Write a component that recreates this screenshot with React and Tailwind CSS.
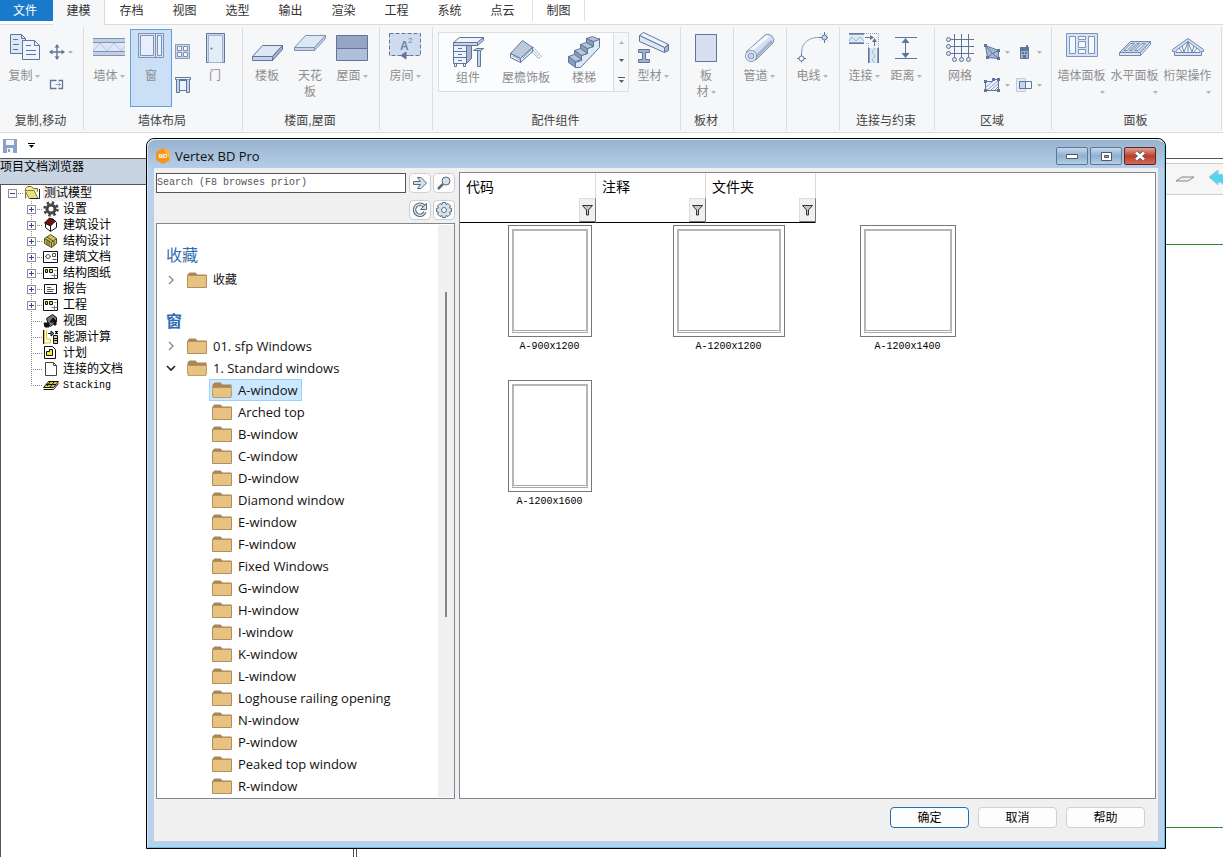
import React, { useState } from 'react';

const tabs = ['存档', '视图', '选型', '输出', '渲染', '工程', '系统', '点云'];

const S = '#5f7599';
const M = '#a3b3cf';
const L = '#dde8f7';

const Icon = ({ size = 32, children }) => (
  <svg width={size} height={size} viewBox={`0 0 ${size} ${size}`} fill="none" stroke={S} className="block shrink-0">
    {children}
  </svg>
);

const Caret = ({ color = '#b4b4b4' }) => (
  <svg width="5" height="3" viewBox="0 0 5 3" className="inline-block shrink-0 align-middle">
    <path d="M0 0h5L2.5 3z" fill={color} />
  </svg>
);

const icons = {
  copy: (
    <Icon>
      <path d="M2.5 2.5h11l4 4v15h-15z" fill={L} />
      <path d="M13.5 2.5v4h4M5 7.5h5M5 12.5h6M5 17.5h5" />
      <path d="M14.5 8.5h12l5 5v14h-17z" fill="#eef4fd" />
      <path d="M26.5 8.5v5h5M18 13.5h5M18 18.5h10M18 22.5h10" />
    </Icon>
  ),
  move: (
    <Icon size={16}>
      <path d="M8 2v12M2 8h12" strokeWidth="1.4" />
      <path d="M8 0l2.5 3.5h-5zM8 16l2.5-3.5h-5zM0 8l3.5-2.5v5zM16 8l-3.5-2.5v5z" fill={S} stroke="none" />
    </Icon>
  ),
  stretch: (
    <Icon size={16}>
      <path d="M7.5 11.5h-6v-8h6M9.5 3.5h4v8h-4" strokeWidth="1.3" />
      <path d="M6.5 7.5h5M9.5 5.5l2 2-2 2" stroke="#8b9dbd" />
    </Icon>
  ),
  wall: (
    <Icon>
      <path d="M0 6h32v18H0z" fill={L} stroke="none" />
      <path d="M0 6h32v4H0zM0 20h32v4H0z" fill="#c3cfe5" stroke="none" />
      <path d="M0 6.5h32M0 10.5h32M0 19.5h32M0 23.5h32" stroke="#7f92b3" />
      <path d="M0 19l7-8 7 8 7-8 7 8 4-5" stroke="#b3c1db" />
    </Icon>
  ),
  window: (
    <Icon>
      <g stroke="#7f92b3">
        <path d="M3.5 1.5h25v24h-25z" fill="#d6e3f5" />
        <path d="M5.5 3.5h13v20h-13zM22.5 3.5h4v20h-4z" fill="#e6effb" />
        <path d="M20.5 2v23" />
      </g>
    </Icon>
  ),
  panes: (
    <Icon size={16}>
      <path d="M.5.5h14v14H.5z" fill="#c6d3e8" stroke="#8b9dbd" />
      <path d="M2.5 2.5h4v4h-4zM8.5 2.5h4v4h-4zM2.5 8.5h4v4h-4zM8.5 8.5h4v4h-4z" fill="#f4f7fc" stroke="#7f92b3" />
    </Icon>
  ),
  opening: (
    <Icon size={16}>
      <path d="M.5.5h15v2H.5z" fill="#eef4fd" />
      <path d="M1.5 2.5v13h3v-13M11.5 2.5v13h3v-13" fill="#c6d3e8" />
      <path d="M4.5 3.5h7v10h-7z" fill="#eef4fd" />
    </Icon>
  ),
  door: (
    <Icon>
      <path d="M7.5 1.5h18v29h-18z" fill="#c9d8ee" />
      <path d="M9.5 3.5h14v27h-14z" fill="#e3edfa" stroke="#a3b3cf" />
      <circle cx="12.5" cy="16.5" r="1" fill={S} stroke="none" />
    </Icon>
  ),
  slab: (
    <Icon>
      <path d="M1.5 24.5l10-11h20l-10 11z" fill={L} />
      <path d="M1.5 24.5v4h20v-4z" fill="#c6d3e8" />
      <path d="M21.5 24.5l10-11v4l-10 11z" fill={M} />
    </Icon>
  ),
  ceiling: (
    <Icon>
      <path d="M.5 15.5l11-12h20l-11 12z" fill={L} stroke="#7f92b3" />
      <path d="M.5 15.5v3h20v-3zM20.5 15.5l11-12v3l-11 12z" fill="#c6d3e8" stroke="#7f92b3" />
    </Icon>
  ),
  roof: (
    <Icon>
      <path d="M.5 3.500h31v13H.5z" fill="#94a6c4" />
      <path d="M.5 16.5h31v12H.5z" fill="#b0bfd8" />
    </Icon>
  ),
  room: (
    <Icon>
      <path d="M.5 1.500h31v22H.5z" fill="#cfdcef" strokeDasharray="4 2" />
      <path d="M17 20v7l-5-3.5zM12 23.5h8" fill={S} />
      <text x="11" y="18" fontSize="12" fontWeight="700" fill="#6f85aa" stroke="none" fontFamily="Liberation Sans, sans-serif">A</text>
      <text x="19" y="11" fontSize="8" fill="#6f85aa" stroke="none" fontFamily="Liberation Sans, sans-serif">2</text>
    </Icon>
  ),
  desk: (
    <Icon>
      <path d="M1.5 9.5h13v18h-13z" fill="#eaf1fb" />
      <path d="M14.5 9.5h5v13l-5 5z" fill={M} />
      <path d="M1.5 15.5h13M1.5 21.5h13M6 12.5h4M6 18.5h4M6 24.5h4M2.5 27.5v3h2v-3M11.5 27.5v3h2v-3" />
      <path d="M1.5 6.5l6-5h24l-6 5z" fill="#eef4fd" />
      <path d="M1.5 6.5h24v3h-24zM25.5 6.5l6-5v3l-6 5z" fill="#c6d3e8" />
      <path d="M21.500 14.5l3-2h7l-3 2zM25.5 14.500v16h3v-16l2-2" fill="#c6d3e8" />
    </Icon>
  ),
  eave: (
    <Icon>
      <path d="M.5 17.5l12-13 10 7-12 11z" fill="#bcc9dd" />
      <path d="M.5 17.5v4l10 5v-4zM10.5 22.5v4l12-11v-4z" fill="#e9f0fa" />
      <path d="M22.5 10.5l9 10-3 2-8-8M3 20l7 4M13 22l8-8M23 14l6 7" strokeDasharray="2 1" stroke="#8093b5" />
    </Icon>
  ),
  stairs: (
    <Icon>
      <path d="M7.500 31.500v-5l6-2v-5l6-2v-5l6-2v-5l6-3v9l-19 20z" fill={L} />
      <path d="M.5 20.5l7 5v6l-7-5zM6.5 14.5l7 5v5l-7-5zM12.5 8.5l7 4v5l-7-4zM18.5 2.5l7 3v5l-7-3z" fill="#8a9dbd" />
      <path d="M.5 20.5l6-2 7 5-6 2zM6.5 14.5l6-2 7 5-6 2zM12.5 8.5l6-2 7 4-6 2zM18.5 2.5l6-2 7 3-6 2z" fill="#b7c5de" />
    </Icon>
  ),
  profile: (
    <Icon>
      <path d="M2.5 3.5l4-3 25 12-4 3z" fill="#eef4fd" />
      <path d="M2.5 3.5v6l25 11v-5z" fill={L} />
      <path d="M27.5 15.5l4-3v6l-4 2z" fill={M} />
      <path d="M1.5 17.5h11v3h-4v7h4v3h-11v-3h4v-7h-4z" fill={M} />
    </Icon>
  ),
  board: (
    <Icon>
      <path d="M5.5 2.5h21v27h-21z" fill="#d6e0f1" />
    </Icon>
  ),
  pipe: (
    <Icon>
      <path d="M3 20L22 3q4-2 7 1t1 7L13 28z" fill="#d3def0" stroke="#7f92b3" />
      <path d="M7 19L25 4" stroke="#f5f9ff" strokeWidth="3" />
      <path d="M12 26L29 9" stroke="#a3b3cf" strokeWidth="3" />
      <circle cx="8" cy="24" r="5.5" fill="#eaf1fb" stroke="#7f92b3" />
      <circle cx="8" cy="24" r="3" fill="#c6d3e8" stroke="#7f92b3" />
    </Icon>
  ),
  wire: (
    <Icon>
      <path d="M5.5 22C5 10 14 5 24 5.5" stroke="#8b9dbd" />
      <path d="M5.5 21.5v9M1 26.5h9M28.5 0v11M23 5.5h9" />
      <path d="M24 1l8 8M32 1l-8 8" stroke="#a9b8d2" strokeDasharray="1 1" />
      <circle cx="5.500" cy="26.5" r="2.5" fill="#f4f7fc" />
      <circle cx="28.500" cy="5.5" r="2.5" fill="#c6d9f2" />
    </Icon>
  ),
  connect: (
    <Icon>
      <path d="M1 1h15v11H1z" fill={L} stroke="none" />
      <path d="M1 2h15M1 11h15" strokeWidth="2" stroke="#8d9fbf" />
      <path d="M1 1.500h15M1 11.500h15" />
      <path d="M1 9l3-4 4 4 4-4 4 4" stroke={M} />
      <path d="M16 1.5h14.5V16M18 11.500h2.500v5" strokeDasharray="1 1" stroke="#8b9dbd" />
      <path d="M17 5.5h6M26.5 14V9" />
      <path d="M22 3l4 2.5-4 2.5zM24 10l2.5-4 2.5 4z" fill={S} stroke="none" />
      <path d="M20 16h11v15H20z" fill={L} stroke="none" />
      <path d="M21 16v15M30 16v15" strokeWidth="2" stroke="#8d9fbf" />
      <path d="M20.5 16v15M30.5 16v15" />
      <path d="M27 16l-3 4 3 4-3 4 3 3" stroke={M} />
    </Icon>
  ),
  distance: (
    <Icon>
      <path d="M5 5.5h22M5 26.5h22M15.5 8v16" />
      <path d="M15.5 6l4 5h-8zM15.5 26l4-5h-8z" fill={S} stroke="none" />
    </Icon>
  ),
  grid: (
    <Icon>
      <path d="M10.5 2v24M17.5 2v24M24.5 2v24M6 7.5h24M6 14.5h24M6 21.5h24" />
      <g fill="#d6e4f8">
        <circle cx="4.5" cy="7.5" r="2" /><circle cx="4.5" cy="14.5" r="2" /><circle cx="4.5" cy="21.5" r="2" />
        <circle cx="10.5" cy="27.5" r="2" /><circle cx="17.5" cy="27.5" r="2" /><circle cx="24.5" cy="27.5" r="2" />
      </g>
    </Icon>
  ),
  areaMesh: (
    <Icon size={16}>
      <path d="M1.5 1.5l13 5v8l-11-1z" fill="#a9b8d2" />
      <path d="M1.5 1.5l7 8 6-3M3.5 13.5l5-4 6 5" />
      <path d="M0 0h3v3H0zM13 5h3v3h-3zM2 12h3v3H2zM13 13h3v3h-3z" fill={S} stroke="none" />
    </Icon>
  ),
  house: (
    <Icon size={16}>
      <path d="M4.5 5.5h8v9h-8z" fill="#9fb0d0" />
      <path d="M4 3h9v4H4zM10 1h2v2h-2zM6 8h2v2H6zM9 8h2v2H9zM7 11h3v4H7z" fill={S} stroke="none" />
    </Icon>
  ),
  areaHatch: (
    <Icon size={16}>
      <path d="M1.5 4.5h7v-2h6v11h-13z" fill="#eef4fd" />
      <path d="M2 10l6-5M3 13l11-9M7 13l7-6M11 13l3-3" stroke="#8b9dbd" />
      <path d="M0 3h3v3H0zM8 1h3v3H8zM13 1h3v3h-3zM0 12h3v3H0zM13 12h3v3h-3z" fill={S} stroke="none" />
    </Icon>
  ),
  overlap: (
    <Icon size={16}>
      <path d="M.5 1.5h9v13h-9z" fill="#e3edfa" stroke="#b9cce0" />
      <path d="M3.5 4.5h12v7h-12z" fill="#f4f7fc" />
      <path d="M3.5 4.5h6v7h-6z" fill="#c6d3e8" />
    </Icon>
  ),
  wallPanel: (
    <Icon>
      <g stroke="#7f95bd">
        <path d="M.5 1.5h31v23H.5z" fill="#d6e3f5" />
        <path d="M3.5 4.5h6v17h-6zM12.5 4.500h7v3h-7zM12.5 9.5h7v6h-7zM12.5 17.5h7v4h-7zM22.5 4.5h6v17h-6z" fill="#f5f8fd" />
      </g>
    </Icon>
  ),
  floorPanel: (
    <Icon>
      <g stroke="#7489ad">
        <path d="M.5 20.5l11-11h20l-10 11z" fill="#c6d3e8" />
        <path d="M.5 20.5v3h21v-3zM21.5 20.5l10-11v3l-10 11z" fill={L} />
        <path d="M5 18.5l7-7h3l-7 7zM11 18.5l7-7h2l-7 7zM16 18.5l7-7h3l-7 7z" fill="#eef4fd" />
      </g>
    </Icon>
  ),
  truss: (
    <Icon>
      <g stroke="#6f86ad">
        <path d="M.5 17.5L16 6.5l15.5 11v2h-2v4h-27v-4h-2z" fill="#d6e2f4" />
        <path d="M4 18.5l12-9 12 9v2H4z" fill="#f4f7fc" />
        <path d="M16 9v11M16 10l-4 10M16 10l4 10M10 14l2 6M22 14l-2 6M7 16l3 4M25 16l-3 4" />
      </g>
    </Icon>
  ),
};

const RibbonButton = ({ icon, label, menu, width = 'w-[42px]', active, gallery }) => (
  <button
    className={`${width} flex flex-col items-center border ${gallery ? 'h-[56px] border-transparent' : active ? 'h-[78px] border-[#62a2d8] bg-[#cbe0f6]' : 'h-[78px] border-transparent'} pt-[2px] text-xs leading-4 text-[#8e8e8e]`}
  >
    {icons[icon]}
    <span className={`${gallery ? 'mt-[2px]' : 'mt-1'} whitespace-nowrap text-center`}>
      {label}
      {menu && <span className="ml-[2px]"><Caret /></span>}
    </span>
  </button>
);

const PanelButton = ({ icon, label }) => (
  <button className="flex h-[78px] w-[53px] flex-col items-center pt-[3px] text-xs leading-4 text-[#8e8e8e]">
    {icons[icon]}
    <span className="mt-1 whitespace-nowrap">{label}</span>
    <span className="self-end pr-[3px]"><Caret /></span>
  </button>
);

const SmallColumn = ({ items, menu, label }) => (
  <div className="flex flex-col items-center gap-[17px] pt-[15px]">
    {items.map((name, i) => (
      <button key={name} aria-label={`${label} ${i + 1}`} className="flex h-4 items-center gap-[5px] px-[3px]">
        {icons[name]}
        {menu && <Caret />}
      </button>
    ))}
  </div>
);

const Group = ({ title, width, className = 'justify-center', children }) => (
  <div className={`${width} my-[2px] flex shrink-0 flex-col border-r border-[#dcdfe2]`}>
    <div className={`flex h-[86px] items-start pt-[2px] ${className}`}>{children}</div>
    <div className="h-4 pr-[2px] text-center text-xs leading-4 text-[#444]">{title}</div>
  </div>
);

const Ribbon = () => (
  <div className="flex h-[108px] overflow-hidden border-b border-[#d9dcde] bg-[#f5f7f9]">
    <Group title="复制,移动" width="w-[84px]" className="pl-[3px]">
      <RibbonButton icon="copy" label="复制" menu />
      <div className="flex flex-col gap-[17px] pl-1 pt-[15px]">
        <button aria-label="移动" className="flex items-center gap-[3px]">{icons.move}<Caret /></button>
        <button aria-label="拉伸">{icons.stretch}</button>
      </div>
    </Group>
    <Group title="墙体布局" width="w-[159px]" className="pl-1">
      <RibbonButton icon="wall" label="墙体" menu />
      <RibbonButton icon="window" label="窗" active />
      <SmallColumn items={['panes', 'opening']} label="开口" />
      <RibbonButton icon="door" label="门" />
    </Group>
    <Group title="楼面,屋面" width="w-[137px]" className="pl-[2px]">
      <RibbonButton icon="slab" label="楼板" width="w-[44px]" />
      <RibbonButton icon="ceiling" label={<>天花<br />板</>} />
      <RibbonButton icon="roof" label="屋面" menu />
    </Group>
    <Group width="w-[53px]" className="justify-center pr-[2px]">
      <RibbonButton icon="room" label="房间" menu />
    </Group>
    <Group title="配件组件" width="w-[248px]" className="pl-[5px]">
      <div className="mt-[3px] flex h-[60px] border border-[#dcdfe2] bg-[#fafcfe]">
        <div className="flex">
          <RibbonButton icon="desk" label="组件" width="w-[58px]" gallery />
          <RibbonButton icon="eave" label="屋檐饰板" width="w-[58px]" gallery />
          <RibbonButton icon="stairs" label="楼梯" width="w-[58px]" gallery />
        </div>
        <div className="flex w-[15px] flex-col items-center justify-around border-l border-[#dcdfe2] bg-[#f5f7f9]">
          <button aria-label="上" className="flex rotate-180"><Caret /></button>
          <button aria-label="下" className="flex"><Caret color="#4c5c78" /></button>
          <button aria-label="更多" className="flex flex-col items-center gap-[2px]">
            <span className="h-px w-[7px] bg-[#4c5c78]" />
            <Caret color="#4c5c78" />
          </button>
        </div>
      </div>
      <RibbonButton icon="profile" label="型材" menu width="w-[48px]" />
    </Group>
    <Group title="板材" width="w-[53px]" className="justify-center pr-[2px]">
      <RibbonButton icon="board" label={<>板<br />材</>} menu />
    </Group>
    <Group width="w-[53px]" className="justify-center pr-[2px]">
      <RibbonButton icon="pipe" label="管道" menu />
    </Group>
    <Group width="w-[53px]" className="justify-center pr-[2px]">
      <RibbonButton icon="wire" label="电线" menu />
    </Group>
    <Group title="连接与约束" width="w-[95px]" className="pl-[3px]">
      <RibbonButton icon="connect" label="连接" menu />
      <RibbonButton icon="distance" label="距离" menu />
    </Group>
    <Group title="区域" width="w-[117px]" className="pl-1">
      <RibbonButton icon="grid" label="网格" />
      <SmallColumn items={['areaMesh', 'areaHatch']} menu label="区域" />
      <SmallColumn items={['house', 'overlap']} menu label="空间" />
    </Group>
    <Group title="面板" width="w-[170px]" className="pl-[3px]">
      <PanelButton icon="wallPanel" label="墙体面板" />
      <PanelButton icon="floorPanel" label="水平面板" />
      <PanelButton icon="truss" label="桁架操作" />
    </Group>
  </div>
);

/* project tree */

const K = '#111';
const treeIcons = {
  gear: (
    <g stroke="#444">
      <circle cx="8" cy="8" r="4" strokeWidth="3" />
      <circle cx="8" cy="8" r="6.5" strokeWidth="2.5" strokeDasharray="2.5 2.6" />
    </g>
  ),
  house: (
    <g stroke={K}>
      <path d="M2.500 5.500v5l5 4 6-4v-5l-4-4z" fill="#fff" />
      <path d="M1.500 6l5-5 6 3-5 5z" fill="#7a0f12" />
      <path d="M7.500 9v5" />
    </g>
  ),
  frame: (
    <g stroke="#55511a">
      <path d="M1.500 5.500l6-4 6 4v5l-5 4-7-4z" fill="#c9c25e" />
      <path d="M1.500 5.500l7 4 5-4M8.500 9.500v5M4 4l6 4M4 7v5M6 8v5M11 8v5" />
    </g>
  ),
  archDoc: (
    <g stroke={K}>
      <path d="M.5 2.5h14v11H.5z" fill="#fff" />
      <path d="M9.5 4.5h3v3h-3zM9.5 10.5h4M2 7.5h1M7 7.5h1" stroke="#555" />
      <circle cx="5" cy="7.5" r="2" stroke="#555" />
    </g>
  ),
  sheet: (
    <g stroke={K}>
      <path d="M.5 2.500h14v11H.5z" fill="#fff" />
      <path d="M2.5 4.5h2v3h-2zM6.5 4.5h3v3h-3z" fill="#e4d93a" />
      <path d="M8.5 10.500h6M11.500 8.500v5M11.500 5.500h2" stroke="#777" />
    </g>
  ),
  report: (
    <g stroke={K}>
      <path d="M1.500 3.500h12v9h-12z" fill="#fff" />
      <path d="M4 6.500h4M4 8.500h7M4 10.500h6" stroke="#555" />
    </g>
  ),
  camera: (
    <g stroke={K}>
      <path d="M3.500 5.500l6-4 4 3v4l-6 5-2-2z" fill="#777" />
      <path d="M1 10h5v4H2zM7 9l3-4 3 3v4h-2V9z" fill={K} />
    </g>
  ),
  energy: (
    <g stroke={K}>
      <path d="M1.500 1v14M3.500 1v9h4v4h-6" stroke="#d6ca2c" />
      <path d="M.5 1v14M5 4.500h4" />
      <path d="M8 2l3 2.500L8 7z" fill="#2aa5a5" />
      <path d="M10.500 6.500h4v8h-4z" fill="#c9d3a4" />
      <path d="M12 2.500h3l-3 2h3M11 9.500h3M11 11.500h3" />
    </g>
  ),
  plan: (
    <g stroke={K}>
      <path d="M1.500 1.500h8l3 3v9h-11z" fill="#fff" />
      <path d="M3.500 6.500h3v-2h3v6h-6z" fill="#f2e53c" />
    </g>
  ),
  page: (
    <g stroke="#444">
      <path d="M2.500 1.500h8l3 3v10h-11z" fill="#fff" />
      <path d="M10.500 1.500v3h3" />
    </g>
  ),
  stack: (
    <g stroke={K}>
      <path d="M.5 10.500l5-6h10l-5 6z" fill="#d8cf3c" />
      <path d="M.5 12.500h10l5-6M4 9l3-4M7 10l4-5M3 7.500h10" />
    </g>
  ),
};

const projectTree = [
  { label: '设置', icon: 'gear', plus: true },
  { label: '建筑设计', icon: 'house', plus: true },
  { label: '结构设计', icon: 'frame', plus: true },
  { label: '建筑文档', icon: 'archDoc', plus: true },
  { label: '结构图纸', icon: 'sheet', plus: true },
  { label: '报告', icon: 'report', plus: true },
  { label: '工程', icon: 'sheet', plus: true },
  { label: '视图', icon: 'camera' },
  { label: '能源计算', icon: 'energy' },
  { label: '计划', icon: 'plan' },
  { label: '连接的文档', icon: 'page' },
  { label: 'Stacking', icon: 'stack', mono: true, last: true },
];

const Branch = ({ plus, minus, last }) => (
  <svg width="17" height="16" viewBox="0 0 17 16" fill="none" className="block shrink-0" shapeRendering="crispEdges">
    {!minus && <path d={last ? 'M5.5 0v8' : 'M5.5 0v16'} stroke="#888" strokeDasharray="1 1" />}
    <path d="M5 8.5h12" stroke="#888" strokeDasharray="1 1" />
    {(plus || minus) && <path d="M1.5 4.5h8v8h-8z" fill="#fff" stroke="#919191" />}
    {(plus || minus) && <path d="M3 8.5h5" stroke="#2b4a94" />}
    {plus && <path d="M5.500 6v5" stroke="#2b4a94" />}
  </svg>
);

const ProjectBrowser = () => (
  <aside className="flex w-[354px] shrink-0 flex-col border-r border-t border-[#555]">
    <h2 className="h-[25px] bg-[#c8d4e2] text-xs leading-4 text-black">项目文档浏览器</h2>
    <ul className="flex-1 border-l border-t border-[#555] bg-white text-xs leading-4 text-black">
      <li className="flex items-center pl-[6px]">
        <Branch minus />
        <Icon size={16}>
          <path d="M1.5 13.5v-10l2-2h4l2 2h4v3" fill="#f3eca0" stroke="#77713a" />
          <path d="M1 5.5h9l4 8H5z" fill="#e8df80" stroke="#8a8345" />
          <path d="M15.5 4v9.500H6" stroke="#222" />
        </Icon>
        <span className="ml-[3px] bg-[#f0f0f0] pl-px">测试模型</span>
      </li>
      {projectTree.map((node) => (
        <li key={node.label} className="flex items-center pl-[25px]">
          <Branch plus={node.plus} last={node.last} />
          <Icon size={16}>{treeIcons[node.icon]}</Icon>
          <span className={node.mono ? 'ml-1 pt-px font-["Liberation_Mono",monospace] text-[10px] leading-[15px]' : 'ml-1'}>{node.label}</span>
        </li>
      ))}
    </ul>
  </aside>
);

const Canvas = () => (
  <main className="ml-[2px] flex min-w-0 flex-1 flex-col border-l border-t border-[#555] bg-white">
    <div className="mt-1 flex h-8 shrink-0 items-center justify-end gap-[14px] overflow-hidden border-y border-[#ccc] bg-[#f6f6f6]">
      <button aria-label="平面">
        <svg width="20" height="6" viewBox="0 0 20 6" fill="#eee" stroke="#888">
          <path d="M1 5l6-4h12l-6 4z" />
        </svg>
      </button>
      <button aria-label="撤销" className="-mr-[10px]">
        <svg width="24" height="20" viewBox="0 0 24 20" fill="#52d5ee" stroke="#a6c8d4">
          <path d="M0 8l9-7v4q12 0 13 14h-6q-2-6-7-6v3z" />
        </svg>
      </button>
    </div>
    <div className="mb-[29px] mt-[49px] flex-1 border-y border-[#2e862e]" />
  </main>
);

/* symbol dialog */

const Folder = ({ open }) => (
  <svg width="20" height="16" viewBox="0 0 20 16" className="block shrink-0">
    <path d="M.5 14V2.5l2-2h6l2 2h9V14z" fill="#a98558" />
    {open
      ? <path d="M0 5.5h20l-1 10H1z" fill="#e8c280" stroke="#b38d5a" strokeWidth=".8" />
      : <path d="M.5 3.5h19v12H.5z" fill="#e8c280" stroke="#b38d5a" />}
  </svg>
);

const Chevron = ({ open }) => (
  <svg width="10" height="10" viewBox="0 0 10 10" fill="none" className="block shrink-0">
    {open
      ? <path d="M1 3l4 4 4-4" stroke="#222" strokeWidth="1.6" />
      : <path d="M3 1l4 4-4 4" stroke="#8a8a8a" strokeWidth="1.4" />}
  </svg>
);

const folders = [
  'A-window', 'Arched top', 'B-window', 'C-window', 'D-window', 'Diamond window', 'E-window',
  'F-window', 'Fixed Windows', 'G-window', 'H-window', 'I-window', 'K-window', 'L-window',
  'Loghouse railing opening', 'N-window', 'P-window', 'Peaked top window', 'R-window',
];

const symbols = [
  { name: 'A-900x1200', width: 'w-[84px]' },
  { name: 'A-1200x1200', width: 'w-[112px]' },
  { name: 'A-1200x1400', width: 'w-[96px]' },
  { name: 'A-1200x1600', width: 'w-[84px]' },
];

const columns = [
  { label: '代码', width: 'w-[136px]' },
  { label: '注释', width: 'w-[110px]' },
  { label: '文件夹', width: 'w-[110px]' },
];

const ToolButton = ({ label, children }) => (
  <button aria-label={label} className="flex h-5 w-[22px] items-center justify-center rounded border border-[#d0d0d0] bg-[#fdfdfd]">
    <svg width="16" height="16" viewBox="0 0 16 16" fill="#d5e2ea" stroke="#566b7c">{children}</svg>
  </button>
);

const TreeFolder = ({ label, open }) => (
  <li className="flex h-[22px] items-center pl-2">
    <Chevron open={open} />
    <span className="ml-[11px]"><Folder open={open} /></span>
    <span className="ml-[6px]">{label}</span>
  </li>
);

const SymbolTree = () => {
  const [selected, setSelected] = useState('A-window');
  return (
    <div className="flex min-h-0 flex-1 border border-[#828790] bg-white p-px pr-0">
      <div className="min-w-0 flex-1 overflow-hidden whitespace-nowrap pt-[18px] font-['Open_Sans','Noto_Sans_CJK_SC',sans-serif] text-[13px] leading-5 text-[#111]">
        <h3 className="h-[26px] pl-2 text-base leading-6 text-[#2f6cb3]">收藏</h3>
        <ul className="mb-[18px] text-xs">
          <TreeFolder label="收藏" />
        </ul>
        <h3 className="h-[26px] pl-2 text-base font-bold leading-6 text-[#2f6cb3]">窗</h3>
        <ul>
          <TreeFolder label="01. sfp Windows" />
          <TreeFolder label="1. Standard windows" open />
          {folders.map((name) => (
            <li key={name} className="flex h-[22px] pl-[51px]">
              <button
                onClick={() => setSelected(name)}
                className={`flex items-center gap-[6px] border pl-[2px] pr-[3px] ${selected === name ? 'border-[#99d1ff] bg-[#cce8ff]' : 'border-transparent'}`}
              >
                <Folder open={selected === name} />
                {name}
              </button>
            </li>
          ))}
        </ul>
      </div>
      <div className="flex w-4 flex-col items-center bg-[#f0f0f0] pt-[67px]">
        <div className="h-[325px] w-[2px] bg-[#868686]" />
      </div>
    </div>
  );
};

const SymbolList = () => (
  <div className="min-w-0 flex-1 overflow-hidden border border-[#828790] bg-white">
    <div className="flex">
      {columns.map((col) => (
        <div key={col.label} className={`${col.width} flex h-[50px] flex-col border-b border-r border-b-black border-r-[#d9d9d9]`}>
          <label htmlFor={col.label} className="h-[25px] pl-[6px] text-sm leading-7 text-black">{col.label}</label>
          <div className="-mr-px flex flex-1">
            <input id={col.label} className="min-w-0 flex-1 px-1 text-xs outline-none" />
            <button aria-label={`筛选 ${col.label}`} className="flex w-[17px] items-center justify-center border border-b-[#777] border-l-[#ddd] border-r-[#777] border-t-[#ddd] bg-[#f0f0f0]">
              <svg width="11" height="11" viewBox="0 0 11 11" fill="#c4c4c4" stroke="#333">
                <path d="M.5.5h10l-4 4.5v5h-2V5z" />
              </svg>
            </button>
          </div>
        </div>
      ))}
    </div>
    <div className="grid grid-cols-[repeat(auto-fill,179px)] pt-[2px]">
      {symbols.map((s) => (
        <figure key={s.name} className="flex h-[155px] flex-col items-center">
          <div className={`${s.width} h-28 border border-[#777] p-[3px]`}>
            <div className="h-full border-2 border-b-[3px] border-[#b6b6b6] border-b-[#a8a8a8] [border-bottom-style:double]" />
          </div>
          <figcaption className="mt-[2px] font-['Liberation_Mono',monospace] text-[10px] leading-4 text-black">{s.name}</figcaption>
        </figure>
      ))}
    </div>
  </div>
);

const DialogButton = ({ children, primary }) => (
  <button className={`h-[21px] w-[79px] rounded border bg-[#fdfdfd] text-xs leading-4 text-black ${primary ? 'border-[#1f6fb5]' : 'border-[#d0d0d0]'}`}>
    {children}
  </button>
);

const captionButton = 'flex h-[18px] w-8 items-center justify-center rounded-xs border';

const SymbolDialog = () => (
  <div
    role="dialog"
    aria-label="Vertex BD Pro"
    className="absolute bottom-2 left-[146px] right-[57px] top-[138px] flex flex-col rounded-t-lg border border-black bg-[#b9d1ea]"
  >
    <div className="flex min-h-0 flex-1 flex-col rounded-t-lg border border-b-[#55c8e8] border-l-[#d5e6f6] border-r-[#55c8e8] border-t-[#e8f1fa] bg-linear-to-b from-[#98b3d0] to-[#b9d1ea] to-[32px] px-[6px] pb-[6px]">
      <div className="flex h-7 shrink-0 items-center pl-px pr-[2px] pt-1">
        <svg width="16" height="16" viewBox="0 0 16 16">
          <path d="M8 0l7 4v8l-7 4-7-4V4z" fill="#f7941d" />
          <path d="M8 0l7 4v8z" fill="#fbb731" />
          <text x="8" y="10" textAnchor="middle" fontSize="6" fontWeight="700" fill="#fff" fontFamily="Liberation Sans, sans-serif">BD</text>
        </svg>
        <h1 className="ml-1 flex-1 font-['Open_Sans',sans-serif] text-[13px] leading-5 text-[#111]">Vertex BD Pro</h1>
        <div className="flex gap-[2px]">
          <button aria-label="最小化" className={`${captionButton} border-[#5c7896] bg-linear-to-b from-[#c6d8ea] via-[#8fb0d0] to-[#b4cfe8]`}>
            <svg width="12" height="5"><path d="M.5.5h11v4H.5z" fill="#fff" stroke="#556" /></svg>
          </button>
          <button aria-label="最大化" className={`${captionButton} border-[#5c7896] bg-linear-to-b from-[#c6d8ea] via-[#8fb0d0] to-[#b4cfe8]`}>
            <svg width="11" height="9"><path d="M.5.5h10v8H.5z" fill="#fff" stroke="#556" /><path d="M3.5 3.5h4v2h-4z" fill="#8fb0d0" stroke="#556" /></svg>
          </button>
          <button aria-label="关闭" className={`${captionButton} border-[#5e2420] bg-linear-to-b from-[#dfa093] via-[#bb3e28] to-[#cf6a55]`}>
            <svg width="12" height="10"><path d="M2 1.5l8 7M10 1.5l-8 7" stroke="#556" strokeWidth="4" /><path d="M2 1.5l8 7M10 1.5l-8 7" stroke="#fff" strokeWidth="2.6" /></svg>
          </button>
        </div>
      </div>
      <div className="flex min-h-0 flex-1 flex-col bg-[#f0f0f0] px-[2px] pt-1">
        <div className="flex min-h-0 flex-1 gap-1">
          <div className="flex w-[299px] shrink-0 flex-col">
            <div className="mt-px flex gap-[3px]">
              <input
                aria-label="Search"
                placeholder="Search (F8 browses prior)"
                className="h-5 min-w-0 flex-1 border border-[#555] bg-white pb-[2px] font-['Liberation_Mono',monospace] text-[10px] outline-none placeholder:text-[#555]"
              />
              <div className="flex gap-[2px]">
                <ToolButton label="前进"><path d="M1.5 6.5h7L5.5 2.5H9L14.500 8 9 13.5H5.5l3-4h-7z" /></ToolButton>
                <ToolButton label="查找">
                  <path d="M7 9l-5 5" strokeWidth="2.5" />
                  <circle cx="10" cy="6" r="4" />
                </ToolButton>
              </div>
            </div>
            <div className="mb-[3px] mt-[7px] flex justify-end gap-[2px]">
              <ToolButton label="刷新">
                <path d="M13 10a5.500 5.500 0 1 1-1-6" fill="none" strokeWidth="3.5" />
                <path d="M13 10a5.500 5.500 0 1 1-1-6" fill="none" stroke="#d5e2ea" strokeWidth="1.5" />
                <path d="M14.5 1.5v6h-6z" />
              </ToolButton>
              <ToolButton label="设置">
                <path d="M6.500.500h3l.500 2 2-1 2.500 2.500-1 2 2 .500v3l-2 .500 1 2-2.500 2.500-2-1-.500 2h-3l-.500-2-2 1L1.500 12l1-2-2-.500v-3l2-.500-1-2L4 1.500l2 1z" />
                <circle cx="8" cy="8" r="2.5" fill="#fff" />
              </ToolButton>
            </div>
            <SymbolTree />
          </div>
          <SymbolList />
        </div>
        <div className="flex shrink-0 justify-end gap-[9px] pb-[13px] pr-[11px] pt-2">
          <DialogButton primary>确定</DialogButton>
          <DialogButton>取消</DialogButton>
          <DialogButton>帮助</DialogButton>
        </div>
      </div>
    </div>
  </div>
);

const App = () => (
  <div className="relative flex h-screen min-h-[600px] flex-col overflow-hidden bg-white font-['Liberation_Sans','Noto_Sans_CJK_SC',sans-serif]">
    <nav className="flex h-[25px] shrink-0 border-b border-[#d9dcde] text-xs leading-5 text-[#333]">
      <button className="h-[21px] w-[53px] bg-[#1979ca] pr-[3px] text-white">文件</button>
      <button className="-mb-px h-[25px] w-[52px] border-r border-[#d9dcde] bg-[#f5f7f9] pb-1">建模</button>
      {tabs.map((t) => (
        <button key={t} className="h-[21px] w-[53px]">{t}</button>
      ))}
      <button className="ml-[3px] h-[21px] w-[53px] border-x border-[#dcdfe2]">制图</button>
    </nav>
    <Ribbon />
    <div className="flex h-[25px] shrink-0 items-center gap-[11px] pl-[3px]">
      <button aria-label="保存">
        <svg width="14" height="14" viewBox="0 0 14 14" className="block">
          <path d="M0 0h14v14H0z" fill="#8aa3c4" />
          <path d="M3 1h8v5H3zM4 9h6v5H4z" fill="#f5f8fc" />
          <path d="M5 10h2v3H5z" fill="#8aa3c4" />
        </svg>
      </button>
      <button aria-label="自定义工具栏" className="flex flex-col items-center gap-px">
        <span className="h-px w-[7px] bg-black" />
        <svg width="7" height="4" viewBox="0 0 7 4"><path d="M1 0h5L3.5 3z" /></svg>
      </button>
    </div>
    <div className="flex min-h-0 flex-1">
      <ProjectBrowser />
      <Canvas />
    </div>
    <SymbolDialog />
  </div>
);

export default App;
